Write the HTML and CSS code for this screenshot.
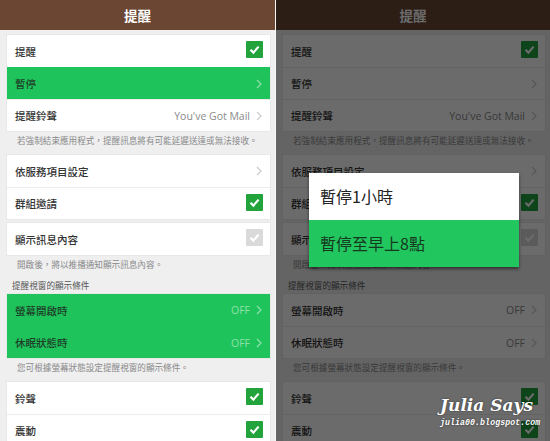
FILE: index.html
```html
<!DOCTYPE html>
<html lang="zh-Hant">

<head>
    <meta charset="UTF-8" />
    <meta name="viewport" content="width=device-width, initial-scale=1.0" />
    <title>提醒</title>
    <link rel="stylesheet" href="styles.css">
</head>

<body>
    <div class="screens">
        <section class="phone" id="phone-left">
            <header class="bar">提醒</header>
            <div class="content"></div>
        </section>

        <section class="phone" id="phone-right">
            <header class="bar">提醒</header>
            <div class="content"></div>
            <div class="dim"></div>
            <div class="dialog">
                <div class="dialog-item">暫停1小時</div>
                <div class="dialog-item active">暫停至早上8點</div>
            </div>
            <div class="mark">
                <div class="mark-name">Julia Says</div>
                <div class="mark-url">julia00.blogspot.com</div>
            </div>
        </section>
    </div>

    <script>
        const sections = [
            { type: "card", rows: [
                { label: "提醒", check: "on" },
                { label: "暫停", arrow: true, hi: true },
                { label: "提醒鈴聲", value: "You've Got Mail", arrow: true }
            ] },
            { type: "note", text: "若強制結束應用程式，提醒訊息將有可能延遲送達或無法接收。" },
            { type: "card", rows: [
                { label: "依服務項目設定", arrow: true },
                { label: "群組邀請", check: "on" }
            ] },
            { type: "card", gap: true, rows: [
                { label: "顯示訊息內容", check: "off" }
            ] },
            { type: "note", text: "開啟後，將以推播通知顯示訊息內容。" },
            { type: "title", text: "提醒視窗的顯示條件" },
            { type: "card", rows: [
                { label: "螢幕開啟時", value: "OFF", arrow: true, hi: true },
                { label: "休眠狀態時", value: "OFF", arrow: true, hi: true }
            ] },
            { type: "note", text: "您可根據螢幕狀態設定提醒視窗的顯示條件。" },
            { type: "card", rows: [
                { label: "鈴聲", check: "on" },
                { label: "震動", check: "on" }
            ] }
        ];

        const checkIcon = `<svg class="check" width="17" height="17" viewBox="0 0 17 17">
            <rect width="17" height="17" rx="1"/>
            <polyline points="4.5,8.8 7.4,11.6 12.6,5.6" fill="none" stroke="#fff" stroke-width="2.2"/>
        </svg>`;

        const arrowIcon = `<svg class="arrow" width="6" height="10" viewBox="0 0 6 10">
            <polyline points="1,1 5,5 1,9" fill="none" stroke="currentColor" stroke-width="1.2"/>
        </svg>`;

        function renderRow(row, highlight) {
            let cls = "row";
            if (row.hi && highlight) cls += " hi";
            let right = "";
            if (row.value) right += `<span class="value">${row.value}</span>`;
            if (row.arrow) right += arrowIcon;
            if (row.check) right += `<span class="box ${row.check}">${checkIcon}</span>`;
            return `<div class="${cls}"><span class="label">${row.label}</span><span class="side">${right}</span></div>`;
        }

        function renderContent(el, highlight) {
            el.innerHTML = "";
            sections.forEach(s => {
                if (s.type === "card") {
                    el.innerHTML += `<div class="card${s.gap ? " gap" : ""}">${s.rows.map(r => renderRow(r, highlight)).join("")}</div>`;
                } else {
                    el.innerHTML += `<p class="${s.type}">${s.text}</p>`;
                }
            });
        }

        renderContent(document.querySelector("#phone-left .content"), true);
        renderContent(document.querySelector("#phone-right .content"), false);
    </script>
</body>

</html>
```

FILE: styles.css
```css
body {
    margin: 0;
    background: #ffffff;
    font-family: "Noto Sans CJK TC", "Noto Sans", sans-serif;
    color: #333333;
}

.screens {
    display: flex;
    width: 550px;
    height: 441px;
    overflow: hidden;
}

.phone {
    position: relative;
    width: 275px;
    height: 441px;
    overflow: hidden;
    background: #efeff0;
}

#phone-left {
    border-right: 1px solid #f8f8f8;
}

#phone-right {
    width: 274px;
}

.bar {
    height: 30px;
    line-height: 30px;
    text-align: center;
    font-size: 13.5px;
    font-weight: bold;
    color: #ffffff;
    background: #6a4633;
}

.content {
    padding: 5px 5px 0 7px;
}

.card {
    background: #ffffff;
    box-shadow: 0 0 0 1px #e8e8e8;
}

.card.gap {
    margin-top: 4px;
}

.row {
    display: flex;
    align-items: center;
    justify-content: space-between;
    height: 32px;
    box-sizing: border-box;
    padding: 0 7px 0 8px;
    border-top: 1px solid #ececec;
    font-size: 10.5px;
    font-weight: 500;
}

.row:first-child {
    border-top: none;
}

.row.hi {
    background: #1fc35b;
    border-top-color: #1fc35b;
    color: #1e3f29;
}

.side {
    display: flex;
    align-items: center;
    gap: 6px;
}

.value {
    font-family: "Open Sans", "Liberation Sans", sans-serif;
    font-size: 10.5px;
    color: #8a8a8a;
}

.row.hi .value {
    color: #8ee0aa;
}

.arrow {
    color: #cccccc;
    margin-right: 1px;
}

.row.hi .arrow {
    color: #8ee0aa;
}

.check rect {
    fill: #22a33c;
}

.box.off .check rect {
    fill: #dadada;
}

.note {
    margin: 0;
    height: 24px;
    box-sizing: border-box;
    padding: 3px 0 0 10px;
    font-size: 8.6px;
    line-height: 13px;
    color: #8a8a8a;
}

.title {
    margin: 0;
    height: 15px;
    padding: 0 0 0 5px;
    box-sizing: border-box;
    font-size: 8.6px;
    line-height: 13px;
    color: #555555;
}

.dim {
    position: absolute;
    inset: 0;
    background: rgba(0, 0, 0, 0.58);
}

.dialog {
    position: absolute;
    left: 33px;
    top: 173px;
    width: 210px;
    background: #ffffff;
    box-shadow: 0 2px 3px rgba(0, 0, 0, 0.5);
}

.dialog-item {
    height: 47px;
    line-height: 47px;
    padding-left: 11px;
    font-size: 16px;
    color: #222222;
}

.dialog-item.active {
    background: #22c65e;
    color: #15381f;
}

.mark {
    position: absolute;
    left: 164px;
    top: 394px;
    color: #ffffff;
    text-shadow: 0 0 2px rgba(0, 0, 0, 0.6);
}

.mark-name {
    font-family: "DejaVu Serif", serif;
    font-style: italic;
    font-weight: bold;
    font-size: 17px;
    line-height: 22px;
}

.mark-url {
    font-family: "Liberation Mono", monospace;
    font-style: italic;
    font-weight: bold;
    font-size: 8.2px;
    letter-spacing: 0.1px;
    line-height: 14px;
}
```
